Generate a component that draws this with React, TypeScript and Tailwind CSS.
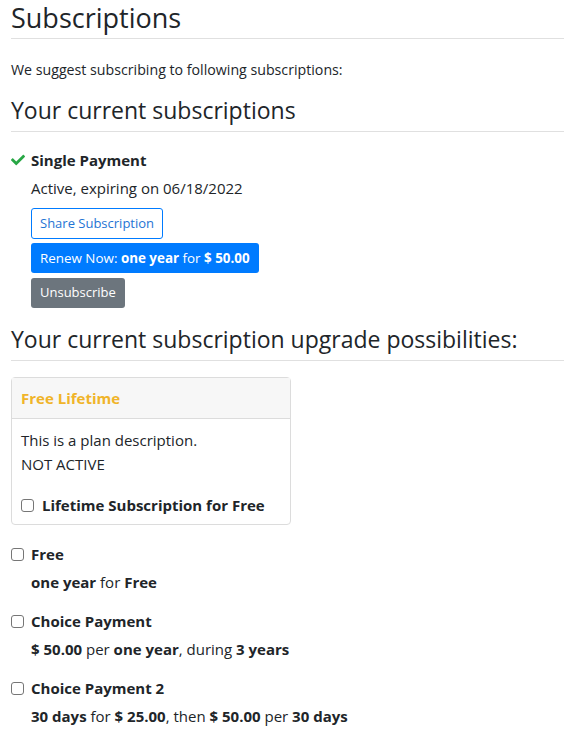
import React from 'react'
import { FaCheck } from 'react-icons/fa'

const font = { fontFamily: '"Open Sans", "Noto Sans", sans-serif' }

function Box() {
  return <span className="inline-block h-[13px] w-[13px] shrink-0 rounded-[3px] border border-[#767676] bg-white" />
}

function Option({ title, children }: { title: string; children: React.ReactNode }) {
  return (
    <div>
      <div className="flex h-[28px] items-center gap-[7px]">
        <Box />
        <span className="font-bold">{title}</span>
      </div>
      <div className="flex h-[28px] items-center pl-[20px]">
        <span>{children}</span>
      </div>
    </div>
  )
}

export default function App() {
  return (
    <div style={font} className="min-h-[741px] bg-white pl-[11px] text-[15px] text-[#212529]">
      <h2 className="flex h-[38px] items-center pb-[4px] text-[27px] font-medium leading-none">Subscriptions</h2>
      <div className="border-t border-[#e0e0e0]" />
      <p className="mt-[20px] text-[14.2px] leading-[22px]">We suggest subscribing to following subscriptions:</p>

      <h3 className="mt-[12px] flex h-[38px] items-center pb-[4px] text-[23px] font-medium leading-none">
        Your current subscriptions
      </h3>
      <div className="border-t border-[#e0e0e0]" />

      <div className="mt-[14px]">
        <div className="flex h-[28px] items-center gap-[6px]">
          <FaCheck className="h-[14px] w-[14px] text-[#28a745]" />
          <span className="font-bold">Single Payment</span>
        </div>
        <div className="flex h-[28px] items-center pl-[20px]">Active, expiring on 06/18/2022</div>
        <div className="mt-[6px] flex flex-col items-start gap-[4px] pl-[20px] text-[13px]">
          <button className="h-[31px] rounded-[3px] border border-[#007bff] bg-white px-[8px] text-[#1f74d4]">
            Share Subscription
          </button>
          <button className="h-[30px] rounded-[3px] bg-[#007bff] px-[9px] text-[13.4px] text-white">
            Renew Now: <b>one year</b> for <b>$ 50.00</b>
          </button>
          <button className="mt-[1px] h-[30px] rounded-[3px] bg-[#6c757d] px-[9px] text-white">Unsubscribe</button>
        </div>
      </div>

      <h3 className="mt-[14px] flex h-[38px] items-center pb-[4px] text-[23px] font-medium leading-none">
        Your current subscription upgrade possibilities:
      </h3>
      <div className="border-t border-[#e0e0e0]" />

      <div className="mt-[16px] w-[280px] rounded-[4px] border border-[#dcdcdc]">
        <div className="flex h-[41px] items-center border-b border-[#dcdcdc] bg-[#f7f7f7] px-[9px] font-bold text-[#f0b429]">
          Free Lifetime
        </div>
        <div className="px-[9px] pb-[7px] pt-[9px] leading-[24px]">
          <div>This is a plan description.</div>
          <div>NOT ACTIVE</div>
          <div className="mt-[17px] flex items-center gap-[8px]">
            <Box />
            <span className="font-bold">Lifetime Subscription for Free</span>
          </div>
        </div>
      </div>

      <div className="mt-[15px] flex flex-col gap-[11px]">
        <Option title="Free">
          <b>one year</b> for <b>Free</b>
        </Option>
        <Option title="Choice Payment">
          <b>$ 50.00</b> per <b>one year</b>, during <b>3 years</b>
        </Option>
        <Option title="Choice Payment 2">
          <b>30 days</b> for <b>$ 25.00</b>, then <b>$ 50.00</b> per <b>30 days</b>
        </Option>
      </div>
    </div>
  )
}
